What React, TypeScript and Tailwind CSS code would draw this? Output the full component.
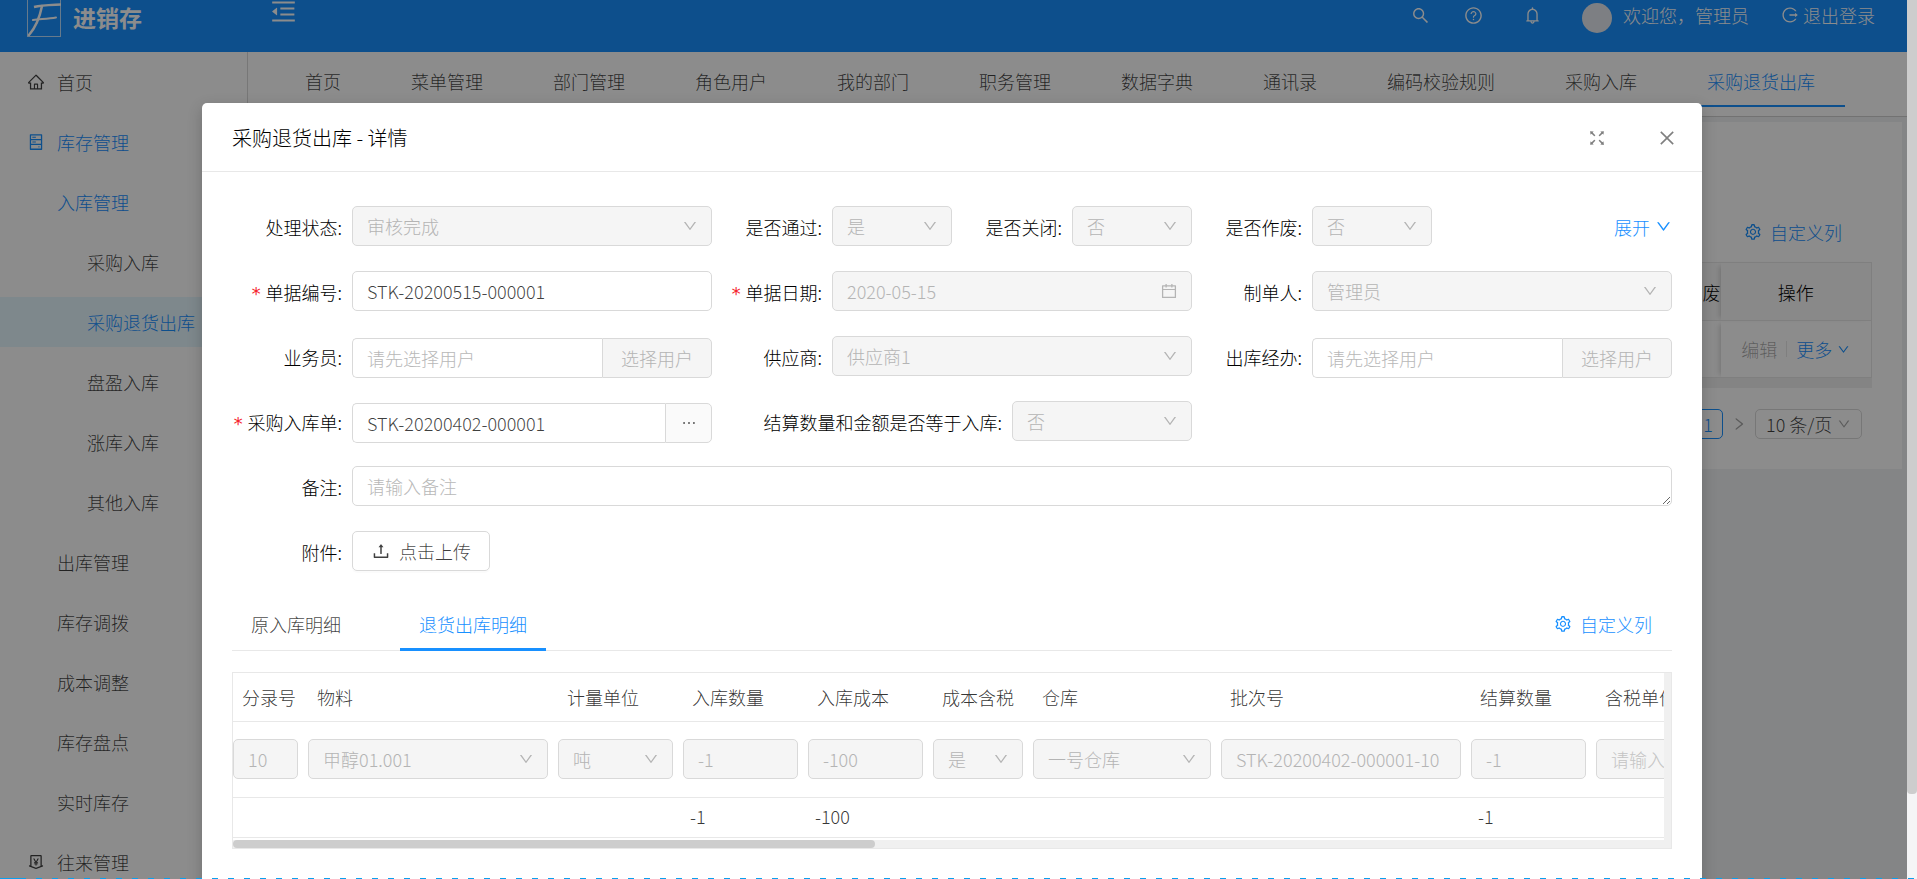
import React from "react";
import {
  AiOutlineBell,
  AiOutlineCalendar,
  AiOutlineClose,
  AiOutlineDown,
  AiOutlineEllipsis,
  AiOutlineFullscreen,
  AiOutlineHdd,
  AiOutlineHome,
  AiOutlineLogout,
  AiOutlineMenuFold,
  AiOutlineMoneyCollect,
  AiOutlineQuestionCircle,
  AiOutlineRight,
  AiOutlineSearch,
  AiOutlineSetting,
  AiOutlineUpload,
} from "react-icons/ai";

type MenuItem = {
  label: string;
  level: 0 | 1 | 2;
  icon?: React.ReactNode;
  state?: "open" | "selected";
};

const menu: MenuItem[] = [
  { label: "首页", level: 0, icon: <AiOutlineHome /> },
  { label: "库存管理", level: 0, icon: <AiOutlineHdd />, state: "open" },
  { label: "入库管理", level: 1, state: "open" },
  { label: "采购入库", level: 2 },
  { label: "采购退货出库", level: 2, state: "selected" },
  { label: "盘盈入库", level: 2 },
  { label: "涨库入库", level: 2 },
  { label: "其他入库", level: 2 },
  { label: "出库管理", level: 1 },
  { label: "库存调拨", level: 1 },
  { label: "成本调整", level: 1 },
  { label: "库存盘点", level: 1 },
  { label: "实时库存", level: 1 },
  { label: "往来管理", level: 0, icon: <AiOutlineMoneyCollect /> },
];

const pageTabs = [
  "首页",
  "菜单管理",
  "部门管理",
  "角色用户",
  "我的部门",
  "职务管理",
  "数据字典",
  "通讯录",
  "编码校验规则",
  "采购入库",
  "采购退货出库",
];

const levelPadding = ["pl-[27px]", "pl-[57px]", "pl-[87px]"];

function Header() {
  return (
    <header className="flex h-[52px] shrink-0 items-center bg-[#1890ff] pb-[22px] text-white">
      <div className="flex w-[247px] items-center gap-3 pl-[27px]">
        <svg viewBox="0 0 34 40" className="mt-1 h-10 w-[34px]" fill="none" stroke="currentColor">
          <rect x="0.5" y="0.5" width="33" height="39" strokeOpacity="0.7" />
          <path d="M7 10c8-2 17-2 27-2.500" strokeWidth="2.500" />
          <path d="M15 9c-2 10-6 21-13 29" strokeWidth="2.500" strokeLinecap="round" />
          <path d="M6 23c7-1 15-1 23-2.500" strokeWidth="2" strokeLinecap="round" />
        </svg>
        <span className="pt-1 text-[23px] font-bold leading-8">进销存</span>
      </div>
      <button type="button" aria-label="收起菜单" className="ml-[22px] pb-2 text-[29px]">
        <AiOutlineMenuFold />
      </button>
      <div className="ml-auto flex items-center pr-8">
        <button type="button" aria-label="搜索" className="pt-px text-[19px]">
          <AiOutlineSearch />
        </button>
        <button type="button" aria-label="帮助" className="ml-[34px] pt-px text-[19px]">
          <AiOutlineQuestionCircle />
        </button>
        <button type="button" aria-label="通知" className="ml-10 pt-px text-[19px]">
          <AiOutlineBell />
        </button>
        <span className="ml-10 mt-[5px] size-[30px] rounded-full bg-[#e4e8ee]" />
        <span className="ml-[11px]">欢迎您，管理员</span>
        <a href="#logout" className="ml-8 flex items-center gap-1">
          <AiOutlineLogout className="text-[18px]" />
          退出登录
        </a>
      </div>
    </header>
  );
}

function Sidebar() {
  return (
    <nav className="w-[248px] shrink-0 border-r border-[#d9d9d9] bg-white pt-[5px]">
      <ul className="flex flex-col gap-[10px]">
        {menu.map((m) => (
          <li key={m.label}>
            <a
              href="#menu"
              className={`flex h-[50px] items-center gap-3 pb-px ${levelPadding[m.level]} ${
                m.state ? "text-[#1890ff]" : "text-black/75"
              } ${m.state === "selected" ? "bg-[#e6f7ff]" : ""}`}
            >
              {m.icon && <span className="text-[18px]">{m.icon}</span>}
              {m.label}
            </a>
          </li>
        ))}
      </ul>
    </nav>
  );
}

function PageTabs() {
  return (
    <div className="flex h-[65px] shrink-0 items-start gap-[10px] overflow-hidden whitespace-nowrap border-b border-[#d0d0d0] bg-white pl-[27px]">
      {pageTabs.map((t, i) => (
        <a
          key={t}
          href="#tab"
          className={`flex h-[55px] items-center border-b-2 px-[30px] pt-1 ${
            i === pageTabs.length - 1
              ? "border-[#1890ff] text-[#1890ff]"
              : "border-transparent text-black/75"
          }`}
        >
          {t}
        </a>
      ))}
    </div>
  );
}

function ListCard() {
  return (
    <section className="mr-[5px] mt-[5px] flex h-[347px] flex-col items-end bg-white pr-[30px] pt-[95px]">
      <a href="#columns" className="mr-[30px] flex h-[30px] items-center gap-2 text-[#1890ff]">
        <AiOutlineSetting className="text-[18px]" />
        自定义列
      </a>
      <table className="mt-[15px] w-[1540px] table-fixed border border-[#e8e8e8]">
        <colgroup>
          <col />
          <col className="w-[151px]" />
        </colgroup>
        <thead>
          <tr className="h-[58px] border-b border-[#e8e8e8] bg-[#fafafa] text-black">
            <th className="text-right font-light">是否作废</th>
            <th className="text-center font-light shadow-[-5px_0_5px_-3px_rgba(0,0,0,0.15)]">操作</th>
          </tr>
        </thead>
        <tbody>
          <tr className="h-[57px]">
            <td />
            <td className="shadow-[-5px_0_5px_-3px_rgba(0,0,0,0.15)]">
              <div className="flex items-center justify-center">
                <span className="text-black/35">编辑</span>
                <span className="mx-[9px] h-4 w-px bg-[#e8e8e8]" />
                <a href="#more" className="flex items-center gap-[5px] text-[#1890ff]">
                  更多
                  <AiOutlineDown className="text-[13px]" />
                </a>
              </div>
            </td>
          </tr>
        </tbody>
      </table>
      <div className="h-[10px] w-[1540px] shrink-0 bg-[#f1f1f1]" />
      <div className="mr-[10px] mt-[21px] flex items-center">
        <button type="button" className="size-[30px] rounded-[5px] border border-[#1890ff] text-[#1890ff]">
          1
        </button>
        <AiOutlineRight className="mx-2 text-[16px] text-black/35" />
        <div className="relative">
          <select
            aria-label="每页条数"
            className="h-[30px] w-[107px] appearance-none rounded-[5px] border border-[#d9d9d9] pl-[10px] text-black/75"
          >
            <option>10 条/页</option>
          </select>
          <AiOutlineDown className="pointer-events-none absolute right-[11px] top-2 text-[14px] text-black/35" />
        </div>
      </div>
    </section>
  );
}

const disabledBox = "border border-[#d9d9d9] bg-[#f5f5f5] text-[#b4b4b4] opacity-100";

function DisabledSelect({ id, value, label }: { id?: string; value: string; label?: string }) {
  return (
    <div className="relative w-full">
      <select
        id={id}
        aria-label={label}
        disabled
        className={`h-10 w-full appearance-none rounded-[5px] pl-[14px] ${disabledBox}`}
      >
        <option>{value}</option>
      </select>
      <AiOutlineDown className="pointer-events-none absolute right-[14px] top-3 text-[16px] text-[#b4b4b4]" />
    </div>
  );
}

function DisabledInput({ value, label, placeholder }: { value?: string; label: string; placeholder?: string }) {
  return (
    <input
      aria-label={label}
      disabled
      defaultValue={value}
      placeholder={placeholder}
      className={`h-10 w-full rounded-[5px] px-[14px] placeholder:text-[#c4c4c4] ${disabledBox}`}
    />
  );
}

function Field({
  id,
  label,
  required,
  span,
  labelClass = "w-[120px]",
  children,
}: {
  id: string;
  label: string;
  required?: boolean;
  span: string;
  labelClass?: string;
  children: React.ReactNode;
}) {
  return (
    <div className={`flex h-10 ${span}`}>
      <label
        htmlFor={id}
        className={`flex shrink-0 items-center justify-end whitespace-nowrap pr-[10px] pt-px text-black ${labelClass}`}
      >
        {required && (
          <span className="mr-1 pt-1 font-['DejaVu_Sans_Mono',monospace] text-[18px] font-normal text-[#f5222d]">
            *
          </span>
        )}
        {label}
        <span>:</span>
      </label>
      <div className="min-w-0 flex-1">{children}</div>
    </div>
  );
}

function UserPicker({ id }: { id: string }) {
  return (
    <div className="mt-[2px] flex h-10">
      <input
        id={id}
        placeholder="请先选择用户"
        className="min-w-0 flex-1 rounded-l-[5px] border border-r-0 border-[#d9d9d9] px-[14px] placeholder:text-[#b8b8b8]"
      />
      <button type="button" disabled className={`w-[110px] rounded-r-[5px] ${disabledBox}`}>
        选择用户
      </button>
    </div>
  );
}

function DetailForm() {
  return (
    <form className="grid grid-cols-6 gap-y-[25px]">
      <Field id="status" label="处理状态" span="col-span-2">
        <DisabledSelect id="status" value="审核完成" />
      </Field>
      <Field id="passed" label="是否通过" span="col-span-1">
        <DisabledSelect id="passed" value="是" />
      </Field>
      <Field id="closed" label="是否关闭" span="col-span-1">
        <DisabledSelect id="closed" value="否" />
      </Field>
      <Field id="voided" label="是否作废" span="col-span-1">
        <DisabledSelect id="voided" value="否" />
      </Field>
      <a href="#expand" className="flex h-10 items-center justify-end gap-[5px] pt-px text-[#1890ff]">
        展开
        <AiOutlineDown className="text-[17px]" />
      </a>

      <Field id="code" label="单据编号" required span="col-span-2">
        <input
          id="code"
          defaultValue="STK-20200515-000001"
          className="h-10 w-full rounded-[5px] border border-[#d9d9d9] px-[14px] text-black/75"
        />
      </Field>
      <Field id="date" label="单据日期" required span="col-span-2">
        <div className="relative">
          <input
            id="date"
            disabled
            defaultValue="2020-05-15"
            className={`h-10 w-full rounded-[5px] px-[14px] ${disabledBox}`}
          />
          <AiOutlineCalendar className="absolute right-[14px] top-[11px] text-[18px] text-[#b4b4b4]" />
        </div>
      </Field>
      <Field id="maker" label="制单人" span="col-span-2">
        <DisabledSelect id="maker" value="管理员" />
      </Field>

      <Field id="clerk" label="业务员" span="col-span-2">
        <UserPicker id="clerk" />
      </Field>
      <Field id="supplier" label="供应商" span="col-span-2">
        <DisabledSelect id="supplier" value="供应商1" />
      </Field>
      <Field id="handler" label="出库经办" span="col-span-2">
        <UserPicker id="handler" />
      </Field>

      <Field id="source" label="采购入库单" required span="col-span-2">
        <div className="mt-[2px] flex h-10">
          <input
            id="source"
            defaultValue="STK-20200402-000001"
            className="min-w-0 flex-1 rounded-l-[5px] border border-r-0 border-[#d9d9d9] px-[14px] text-black/75"
          />
          <button
            type="button"
            aria-label="选择采购入库单"
            className="flex w-[47px] items-center justify-center rounded-r-[5px] border border-[#d9d9d9] bg-[#fafafa] text-[18px] text-black/65"
          >
            <AiOutlineEllipsis />
          </button>
        </div>
      </Field>
      <Field
        id="equal"
        label="结算数量和金额是否等于入库"
        span="col-span-2"
        labelClass="w-[300px]"
      >
        <DisabledSelect id="equal" value="否" />
      </Field>

      <Field id="remark" label="备注" span="col-span-6">
        <textarea
          id="remark"
          placeholder="请输入备注"
          className="block h-10 w-full rounded-[5px] border border-[#d9d9d9] px-[14px] py-[6px] placeholder:text-[#b8b8b8]"
        />
      </Field>

      <Field id="attachment" label="附件" span="col-span-6">
        <button
          id="attachment"
          type="button"
          className="flex h-10 items-center gap-2 rounded-[5px] border border-[#d9d9d9] px-[18px] text-black/75 shadow-[0_2px_0_rgba(0,0,0,0.015)]"
        >
          <AiOutlineUpload className="text-[20px]" />
          点击上传
        </button>
      </Field>
    </form>
  );
}

const columns: { title: string; width: string; kind: "input" | "select"; value?: string; sum?: string }[] = [
  { title: "分录号", width: "w-[75px]", kind: "input", value: "10" },
  { title: "物料", width: "w-[250px]", kind: "select", value: "甲醇01.001" },
  { title: "计量单位", width: "w-[125px]", kind: "select", value: "吨" },
  { title: "入库数量", width: "w-[125px]", kind: "input", value: "-1", sum: "-1" },
  { title: "入库成本", width: "w-[125px]", kind: "input", value: "-100", sum: "-100" },
  { title: "成本含税", width: "w-[100px]", kind: "select", value: "是" },
  { title: "仓库", width: "w-[188px]", kind: "select", value: "一号仓库" },
  { title: "批次号", width: "w-[250px]", kind: "input", value: "STK-20200402-000001-10" },
  { title: "结算数量", width: "w-[125px]", kind: "input", value: "-1", sum: "-1" },
  { title: "含税单价", width: "w-[125px]", kind: "input" },
];

function DetailTable() {
  return (
    <div className="mt-[21px] border border-[#e8e8e8]">
      <div className="flex">
        <div className="min-w-0 flex-1 overflow-hidden">
          <table className="w-[1488px] table-fixed">
            <colgroup>
              {columns.map((c) => (
                <col key={c.title} className={c.width} />
              ))}
            </colgroup>
            <thead>
              <tr className="h-12 border-b border-[#e8e8e8] text-left text-black/80">
                {columns.map((c) => (
                  <th key={c.title} className="whitespace-nowrap pl-[9px] font-light">
                    {c.title}
                  </th>
                ))}
              </tr>
            </thead>
            <tbody>
              <tr className="h-[76px] border-b border-[#e8e8e8]">
                {columns.map((c) => (
                  <td key={c.title} className="pr-[10px]">
                    {c.kind === "select" ? (
                      <DisabledSelect value={c.value ?? ""} label={c.title} />
                    ) : (
                      <DisabledInput
                        value={c.value}
                        label={c.title}
                        placeholder={c.value ? undefined : "请输入含税单价"}
                      />
                    )}
                  </td>
                ))}
              </tr>
            </tbody>
            <tfoot>
              <tr className="h-10 border-b border-[#e8e8e8] text-black/80">
                {columns.map((c) => (
                  <td key={c.title} className="pb-[2px] pl-[7px]">
                    {c.sum}
                  </td>
                ))}
              </tr>
            </tfoot>
          </table>
        </div>
        <div className="-mb-[2px] w-[7px] shrink-0 bg-[#f0f0f0]" />
      </div>
      <div className="mt-[2px] flex h-2 bg-[#f0f0f0]">
        <div className="w-[642px] rounded bg-[#cdcdcd]" />
      </div>
    </div>
  );
}

function DetailModal() {
  return (
    <div
      role="dialog"
      aria-labelledby="dialog-title"
      className="mx-auto mt-[103px] w-[1500px] max-w-full rounded-[5px] bg-white pb-[60px] shadow-[0_5px_15px_rgba(0,0,0,0.2)]"
    >
      <div className="flex h-[69px] items-center border-b border-[#e8e8e8] pl-[30px] pr-[25px] pt-[2px]">
        <h1 id="dialog-title" className="text-[20px] text-black">
          采购退货出库 - 详情
        </h1>
        <button type="button" aria-label="全屏" className="ml-auto text-[20px] text-black/50">
          <AiOutlineFullscreen />
        </button>
        <button type="button" aria-label="关闭" className="ml-[50px] text-[20px] text-black/50">
          <AiOutlineClose />
        </button>
      </div>
      <div className="px-[30px] pt-[34px]">
        <DetailForm />
        <div className="mt-7 flex h-[52px] items-stretch gap-10 border-b border-[#e8e8e8]">
          <button type="button" className="px-[19px] pb-px text-black/75">
            原入库明细
          </button>
          <button
            type="button"
            className="-mb-px border-b-[3px] border-[#1890ff] px-[19px] pt-px text-[#1890ff]"
          >
            退货出库明细
          </button>
          <a href="#columns" className="ml-auto flex items-center gap-2 pb-px pr-5 text-[#1890ff]">
            <AiOutlineSetting className="text-[18px]" />
            自定义列
          </a>
        </div>
        <DetailTable />
      </div>
    </div>
  );
}

export default function App() {
  return (
    <div className="relative flex h-screen overflow-hidden font-['Noto_Sans_CJK_SC',sans-serif] text-[18px] font-light leading-[26px]">
      <div className="relative flex min-w-0 flex-1 flex-col">
        <Header />
        <div className="flex min-h-0 flex-1">
          <Sidebar />
          <main className="min-w-0 flex-1 bg-[#f0f2f5]">
            <PageTabs />
            <ListCard />
          </main>
        </div>
        <div className="absolute inset-0 overflow-hidden bg-black/45 pr-[3px]">
          <DetailModal />
        </div>
      </div>
      <div className="w-[10px] shrink-0 bg-[#f5f5f6]">
        <div className="h-[794px] rounded-b bg-[#cdcdcd]" />
      </div>
      <div className="absolute inset-x-0 bottom-0 flex h-px bg-[repeating-linear-gradient(90deg,transparent_0_4px,#0aa0ee_4px_10px,transparent_10px_16px)]">
        <span className="w-[25px] bg-[#0aa0ee]" />
      </div>
    </div>
  );
}
